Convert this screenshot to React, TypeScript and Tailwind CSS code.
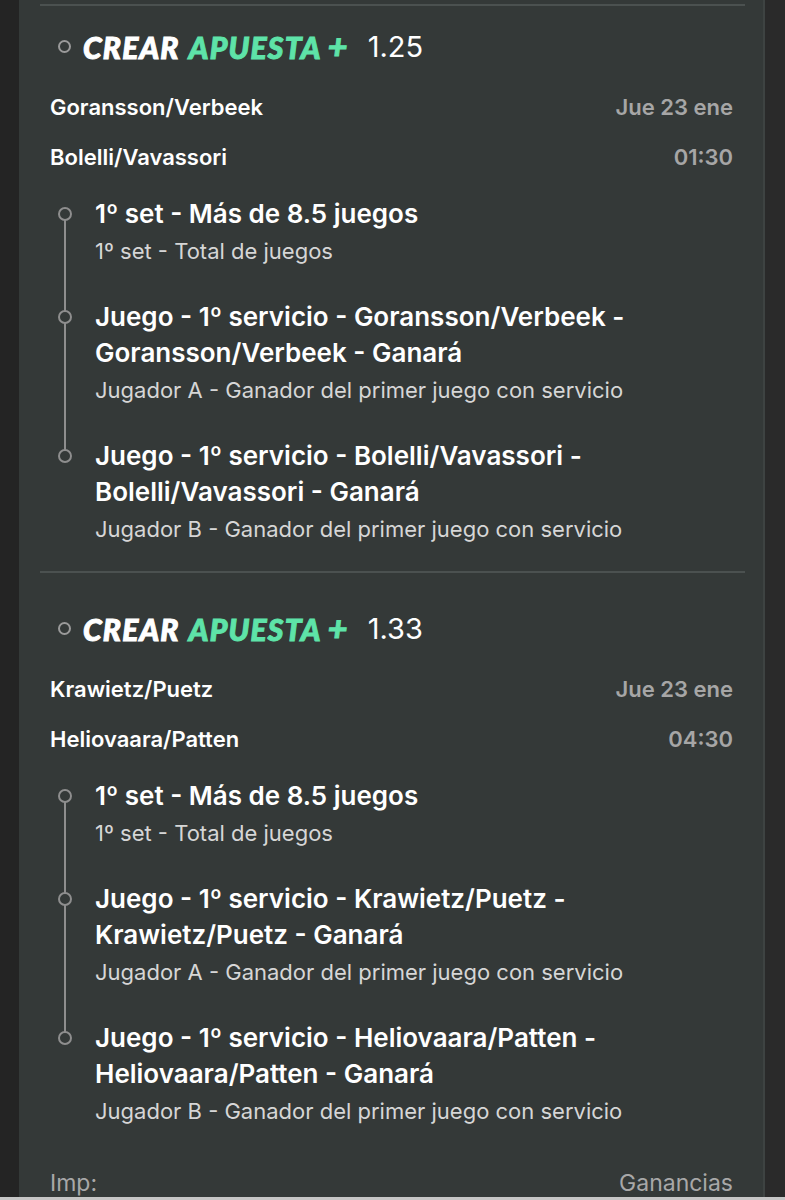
import React from 'react';

type Leg = { title: string[]; sub: string };

type Bet = {
  odds: string;
  home: string;
  away: string;
  date: string;
  time: string;
  legs: Leg[];
};

const bets: Bet[] = [
  {
    odds: '1.25',
    home: 'Goransson/Verbeek',
    away: 'Bolelli/Vavassori',
    date: 'Jue 23 ene',
    time: '01:30',
    legs: [
      { title: ['1º set - Más de 8.5 juegos'], sub: '1º set - Total de juegos' },
      {
        title: ['Juego - 1º servicio - Goransson/Verbeek -', 'Goransson/Verbeek - Ganará'],
        sub: 'Jugador A - Ganador del primer juego con servicio',
      },
      {
        title: ['Juego - 1º servicio - Bolelli/Vavassori -', 'Bolelli/Vavassori - Ganará'],
        sub: 'Jugador B - Ganador del primer juego con servicio',
      },
    ],
  },
  {
    odds: '1.33',
    home: 'Krawietz/Puetz',
    away: 'Heliovaara/Patten',
    date: 'Jue 23 ene',
    time: '04:30',
    legs: [
      { title: ['1º set - Más de 8.5 juegos'], sub: '1º set - Total de juegos' },
      {
        title: ['Juego - 1º servicio - Krawietz/Puetz -', 'Krawietz/Puetz - Ganará'],
        sub: 'Jugador A - Ganador del primer juego con servicio',
      },
      {
        title: ['Juego - 1º servicio - Heliovaara/Patten -', 'Heliovaara/Patten - Ganará'],
        sub: 'Jugador B - Ganador del primer juego con servicio',
      },
    ],
  },
];

const BetSection = ({ bet }: { bet: Bet }) => {
  return (
    <div>
      {/* Header */}
      <div className="h-[40px] flex items-center pl-[18px]">
        <span className="block w-[13px] h-[13px] rounded-full border-2 border-[#9a9a9a]" />
        <span className="ml-[12px] text-[30px] leading-none font-black italic uppercase font-['Lato',sans-serif] tracking-[1.2px] whitespace-nowrap [-webkit-text-stroke:1px_currentColor]">
          <span className="text-white">Crear</span>
          <span className="inline-block w-[9px]" />
          <span className="text-[#5ee3a8]">Apuesta</span>
          <span className="inline-block w-[6px]" />
          <span className="text-[#5ee3a8] text-[34px]">+</span>
        </span>
        <span className="ml-[19px] text-[29px] leading-none text-white font-normal">{bet.odds}</span>
      </div>

      {/* Teams */}
      <div className="mt-[16px] pl-[10px] pr-[12px] text-[22px] font-semibold">
        <div className="h-[50px] flex items-center justify-between">
          <span className="text-white">{bet.home}</span>
          <span className="text-[#a6a6a6]">{bet.date}</span>
        </div>
        <div className="h-[50px] flex items-center justify-between">
          <span className="text-white">{bet.away}</span>
          <span className="text-[#a6a6a6]">{bet.time}</span>
        </div>
      </div>

      {/* Legs */}
      <div className="mt-[14px] relative pl-[18px]">
        <div className="absolute left-[24px] top-[18px] h-[243px] w-[2px] bg-[#8e8e8e]" />
        <div className="flex flex-col gap-[29px]">
          {bet.legs.map((leg, i) => (
            <div key={i} className="flex">
              <div className="w-[37px] shrink-0 pt-[11px]">
                <span className="block w-[14px] h-[14px] rounded-full border-2 border-[#8e8e8e] bg-[#343938] relative" />
              </div>
              <div>
                <div className="text-[26px] leading-[36px] font-semibold text-white">
                  {leg.title.map((l, j) => (
                    <div key={j}>{l}</div>
                  ))}
                </div>
                <div className="text-[22px] leading-[38px] text-[#d6d6d6]">{leg.sub}</div>
              </div>
            </div>
          ))}
        </div>
      </div>
    </div>
  );
};

export default function App() {
  return (
    <div className="h-[1200px] overflow-hidden flex flex-col bg-[#262626] font-['Inter',sans-serif]">
      <div className="h-[1197px] flex">
        <div className="w-[19px] bg-[#242424]" />
        <div className="w-[746px] bg-[#343938] border-r-2 border-[#3e4342] pl-[21px] pr-[18px] pt-[4px]">
          <div className="h-[2px] bg-[#4b5150]" />
          <div className="pt-[20px]">
            <BetSection bet={bets[0]} />
          </div>
          <div className="mt-[23px] h-[2px] bg-[#4b5150]" />
          <div className="pt-[35px]">
            <BetSection bet={bets[1]} />
          </div>

          {/* Footer */}
          <div className="mt-[38px] h-[30px] pl-[10px] pr-[12px] flex items-center justify-between text-[23px] text-[#a8a8a8]">
            <span>Imp:</span>
            <span>Ganancias</span>
          </div>
        </div>
        <div className="flex-1 bg-[#2a2a2a]" />
      </div>
      <div className="h-[3px] bg-[#c6c6c6]" />
    </div>
  );
}
